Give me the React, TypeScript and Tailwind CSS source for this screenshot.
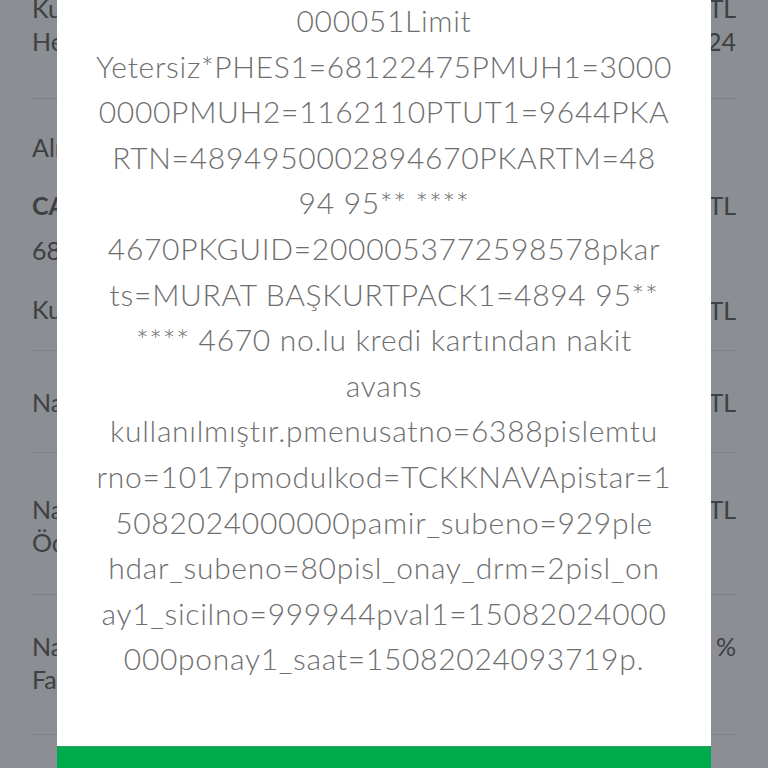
import React from 'react';

const lines = [
  '000051Limit',
  'Yetersiz*PHES1=68122475PMUH1=3000',
  '0000PMUH2=1162110PTUT1=9644PKA',
  'RTN=4894950002894670PKARTM=48',
  '94 95** ****',
  '4670PKGUID=2000053772598578pkar',
  'ts=MURAT BAŞKURTPACK1=4894 95**',
  '**** 4670 no.lu kredi kartından nakit',
  'avans',
  'kullanılmıştır.pmenusatno=6388pislemtu',
  'rno=1017pmodulkod=TCKKNAVApistar=1',
  '5082024000000pamir_subeno=929ple',
  'hdar_subeno=80pisl_onay_drm=2pisl_on',
  'ay1_sicilno=999944pval1=15082024000',
  '000ponay1_saat=15082024093719p.',
];

export default function App() {
  return (
    <div
      className="relative h-[768px] w-[768px] overflow-hidden bg-[#8b8e92]"
      style={{ fontFamily: 'Lato, "Open Sans", sans-serif' }}
    >
      {/* Page behind the dialog */}
      <div className="px-[32px] text-[25px] leading-[33px] text-[#3d4044]">
        <div className="-mt-[8px] flex justify-between">
          <div>
            <p>Kullanılabilir</p>
            <p>Hesap</p>
          </div>
          <div className="text-right">
            <p>TL</p>
            <p>2024</p>
          </div>
        </div>
        <div className="mt-[40px] border-t border-[#7e8185]" />
        <p className="mt-[32px]">Alınan</p>
        <div className="mt-[25px] flex justify-between">
          <div>
            <p className="font-bold">CAA</p>
            <p className="mt-[12px]">6812</p>
            <p className="mt-[26px]">Kullanılan</p>
          </div>
          <div className="text-right">
            <p>TL</p>
            <p className="mt-[72px]">TL</p>
          </div>
        </div>
        <div className="mt-[23px] border-t border-[#7e8185]" />
        <div className="flex justify-between pt-[35px] pb-[33px]">
          <p>Nakit</p>
          <p>TL</p>
        </div>
        <div className="border-t border-[#7e8185]" />
        <div className="flex justify-between pt-[40px] pb-[35px]">
          <div>
            <p>Nakit</p>
            <p>Ödeme</p>
          </div>
          <p>TL</p>
        </div>
        <div className="border-t border-[#7e8185]" />
        <div className="flex justify-between pt-[35px] pb-[38px]">
          <div>
            <p>Nakit</p>
            <p>Faiz</p>
          </div>
          <p>%</p>
        </div>
        <div className="border-t border-[#7e8185]" />
      </div>

      {/* Dialog */}
      <div className="absolute left-[57px] top-0 bottom-0 flex w-[654px] flex-col bg-white">
        <div className="-mt-[2px] flex-1 text-center text-[30px] font-light leading-[45.6px] tracking-[0.7px] text-[#6e6e6e]">
          {lines.map((l, i) => (
            <p key={i} className="whitespace-pre">{l}</p>
          ))}
        </div>
        <div className="h-[22px] border-t border-[#2f9d5c] bg-[#00ab4e]" />
      </div>
    </div>
  );
}
